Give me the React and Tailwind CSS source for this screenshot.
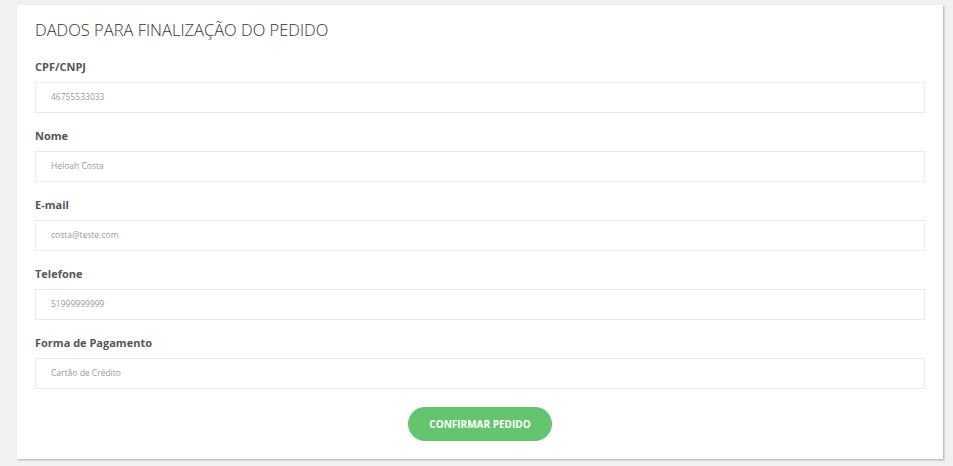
export default function App() {
  const fields = [
    ["CPF/CNPJ", "46755533033"],
    ["Nome", "Heloah Costa"],
    ["E-mail", "costa@teste.com"],
    ["Telefone", "51999999999"],
    ["Forma de Pagamento", "Cartão de Crédito"],
  ];
  return (
    <div className="w-[953px] h-[466px] bg-[#f1f1f1] pt-[5px] pl-[17px]" style={{ fontFamily: '"Open Sans", Roboto, sans-serif' }}>
      <div className="w-[926px] h-[454px] bg-white shadow-[1px_1px_2px_rgba(0,0,0,0.3)] pl-[18px] pr-[18px] pt-[15px]">
        <h1 className="text-[16.5px] leading-[20px] font-light text-[#333]">DADOS PARA FINALIZAÇÃO DO PEDIDO</h1>
        <div className="mt-[20px] flex flex-col gap-[16px]">
          {fields.map(([label, value]) => (
            <div key={label} className="flex flex-col">
              <label className="text-[11px] leading-[14px] font-bold text-[#555]">{label}</label>
              <div className="mt-[8px] h-[31px] border border-[#ebebeb] flex items-center pl-[15px] text-[8.5px] text-[#9a9a9a]">{value}</div>
            </div>
          ))}
        </div>
        <div className="flex justify-center mt-[18px]">
          <button className="w-[144px] h-[34px] rounded-full bg-[#65c46e] text-white text-[10px] font-bold">CONFIRMAR PEDIDO</button>
        </div>
      </div>
    </div>
  );
}
